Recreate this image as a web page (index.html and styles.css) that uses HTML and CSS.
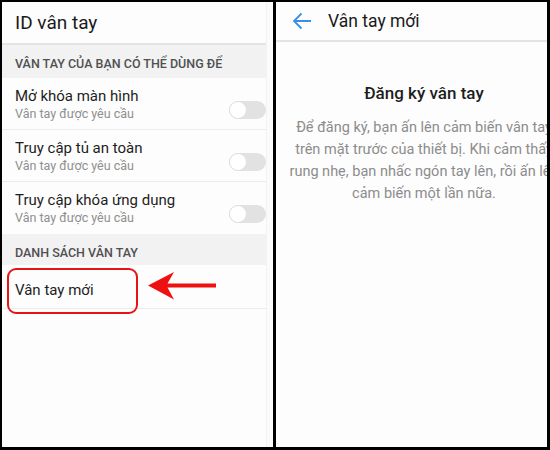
FILE: index.html
```html
<!DOCTYPE html>
<html>
<head>
    <title>ID vân tay</title>
    <link rel="stylesheet" href="styles.css">
</head>
<body>
    <div class="frame">
        <div class="panel left">
            <div class="list">
                <div class="topbar">
                    <span class="topbar-title">ID vân tay</span>
                </div>
                <div class="section first">VÂN TAY CỦA BẠN CÓ THỂ DÙNG ĐỂ</div>
                <div class="item">
                    <div class="item-text">
                        <div class="item-title">Mở khóa màn hình</div>
                        <div class="item-sub">Vân tay được yêu cầu</div>
                    </div>
                    <div class="toggle"><span class="knob"></span></div>
                </div>
                <div class="item">
                    <div class="item-text">
                        <div class="item-title">Truy cập tủ an toàn</div>
                        <div class="item-sub">Vân tay được yêu cầu</div>
                    </div>
                    <div class="toggle"><span class="knob"></span></div>
                </div>
                <div class="item last">
                    <div class="item-text">
                        <div class="item-title">Truy cập khóa ứng dụng</div>
                        <div class="item-sub">Vân tay được yêu cầu</div>
                    </div>
                    <div class="toggle"><span class="knob"></span></div>
                </div>
                <div class="section second">DANH SÁCH VÂN TAY</div>
                <div class="item new">
                    <div class="item-title">Vân tay mới</div>
                    <div class="highlight"></div>
                    <svg class="pointer" width="70" height="30" viewBox="0 0 70 30">
                        <path d="M0 14.5 L26 1 L19.5 12.5 L68 12.5 L68 16.5 L19.5 16.5 L26 28.5 Z" fill="#ee1111"/>
                    </svg>
                </div>
            </div>
            <div class="strip"></div>
        </div>
        <div class="panel right">
            <div class="topbar">
                <svg class="back" width="20" height="18" viewBox="0 0 20 18">
                    <path d="M19 9 H2 M9.5 1.5 L2 9 L9.5 16.5" fill="none" stroke="#3a8ee6" stroke-width="1.8"/>
                </svg>
                <span class="topbar-title">Vân tay mới</span>
            </div>
            <div class="enroll">
                <h1>Đăng ký vân tay</h1>
                <p>Để đăng ký, bạn ấn lên cảm biến vân tay<br>trên mặt trước của thiết bị. Khi cảm thấy<br>rung nhẹ, bạn nhấc ngón tay lên, rồi ấn lên<br>cảm biến một lần nữa.</p>
            </div>
        </div>
    </div>
</body>
</html>
```

FILE: styles.css
```css
body {
    margin: 0;
    padding: 0;
    background: #000;
    font-family: Roboto, "Noto Sans", Arial, sans-serif;
}

.frame {
    width: 550px;
    height: 450px;
    box-sizing: border-box;
    padding: 2px 3px 3px 2px;
    display: flex;
    gap: 3px;
}

.panel {
    width: 271px;
    height: 445px;
    background: #fdfdfd;
    overflow: hidden;
}

.left {
    display: flex;
}

.list {
    width: 265px;
}

.strip {
    width: 6px;
    background: #fbfbfb;
    border-left: 1px solid #f3f3f3;
}

.topbar {
    height: 41px;
    border-bottom: 2px solid #e4e4e4;
    display: flex;
    align-items: center;
}

.left .topbar {
    padding-left: 13px;
}

.left .topbar-title {
    font-size: 19px;
    color: #1a1a1a;
}

.section {
    background: #f2f2f2;
    padding: 11px 0 0 13px;
    box-sizing: border-box;
    font-size: 12.5px;
    line-height: 16px;
    font-weight: 500;
    color: #505050;
}

.section.first {
    height: 33px;
}

.section.second {
    height: 31px;
}

.item {
    height: 52px;
    box-sizing: border-box;
    padding: 9px 0 0 13px;
    border-bottom: 1px solid #ececec;
    display: flex;
    justify-content: space-between;
    align-items: flex-start;
}

.item.last {
    border-bottom: none;
}

.item-title {
    font-size: 15px;
    line-height: 18px;
    color: #1e1e1e;
}

.item-sub {
    font-size: 12.5px;
    line-height: 17px;
    color: #8f8f8f;
}

.toggle {
    width: 37px;
    height: 18px;
    margin-top: 14px;
    border-radius: 9px;
    background: #e2e2e2;
    position: relative;
}

.knob {
    position: absolute;
    left: 0;
    top: 0;
    width: 16px;
    height: 16px;
    border-radius: 50%;
    background: #fff;
    border: 1px solid #e0e0e0;
}

.item.new {
    height: 44px;
    padding-top: 16px;
    position: relative;
}

.highlight {
    position: absolute;
    left: 5px;
    top: 3px;
    width: 131px;
    height: 46px;
    box-sizing: border-box;
    border: 2px solid #e51515;
    border-radius: 9px;
}

.pointer {
    position: absolute;
    left: 146px;
    top: 6px;
}

.right .topbar {
    padding-left: 16px;
    height: 38px;
}

.back {
    margin-right: 16px;
}

.right .topbar-title {
    font-size: 17.5px;
    color: #1a1a1a;
}

.enroll {
    width: 296px;
    text-align: center;
    white-space: nowrap;
}

.enroll h1 {
    margin: 40px 0 0;
    font-size: 17px;
    line-height: 22px;
    font-weight: 500;
    color: #1e1e1e;
}

.enroll p {
    margin: 13px 0 0;
    font-size: 14.5px;
    line-height: 22px;
    color: #8c8c8c;
}
```
